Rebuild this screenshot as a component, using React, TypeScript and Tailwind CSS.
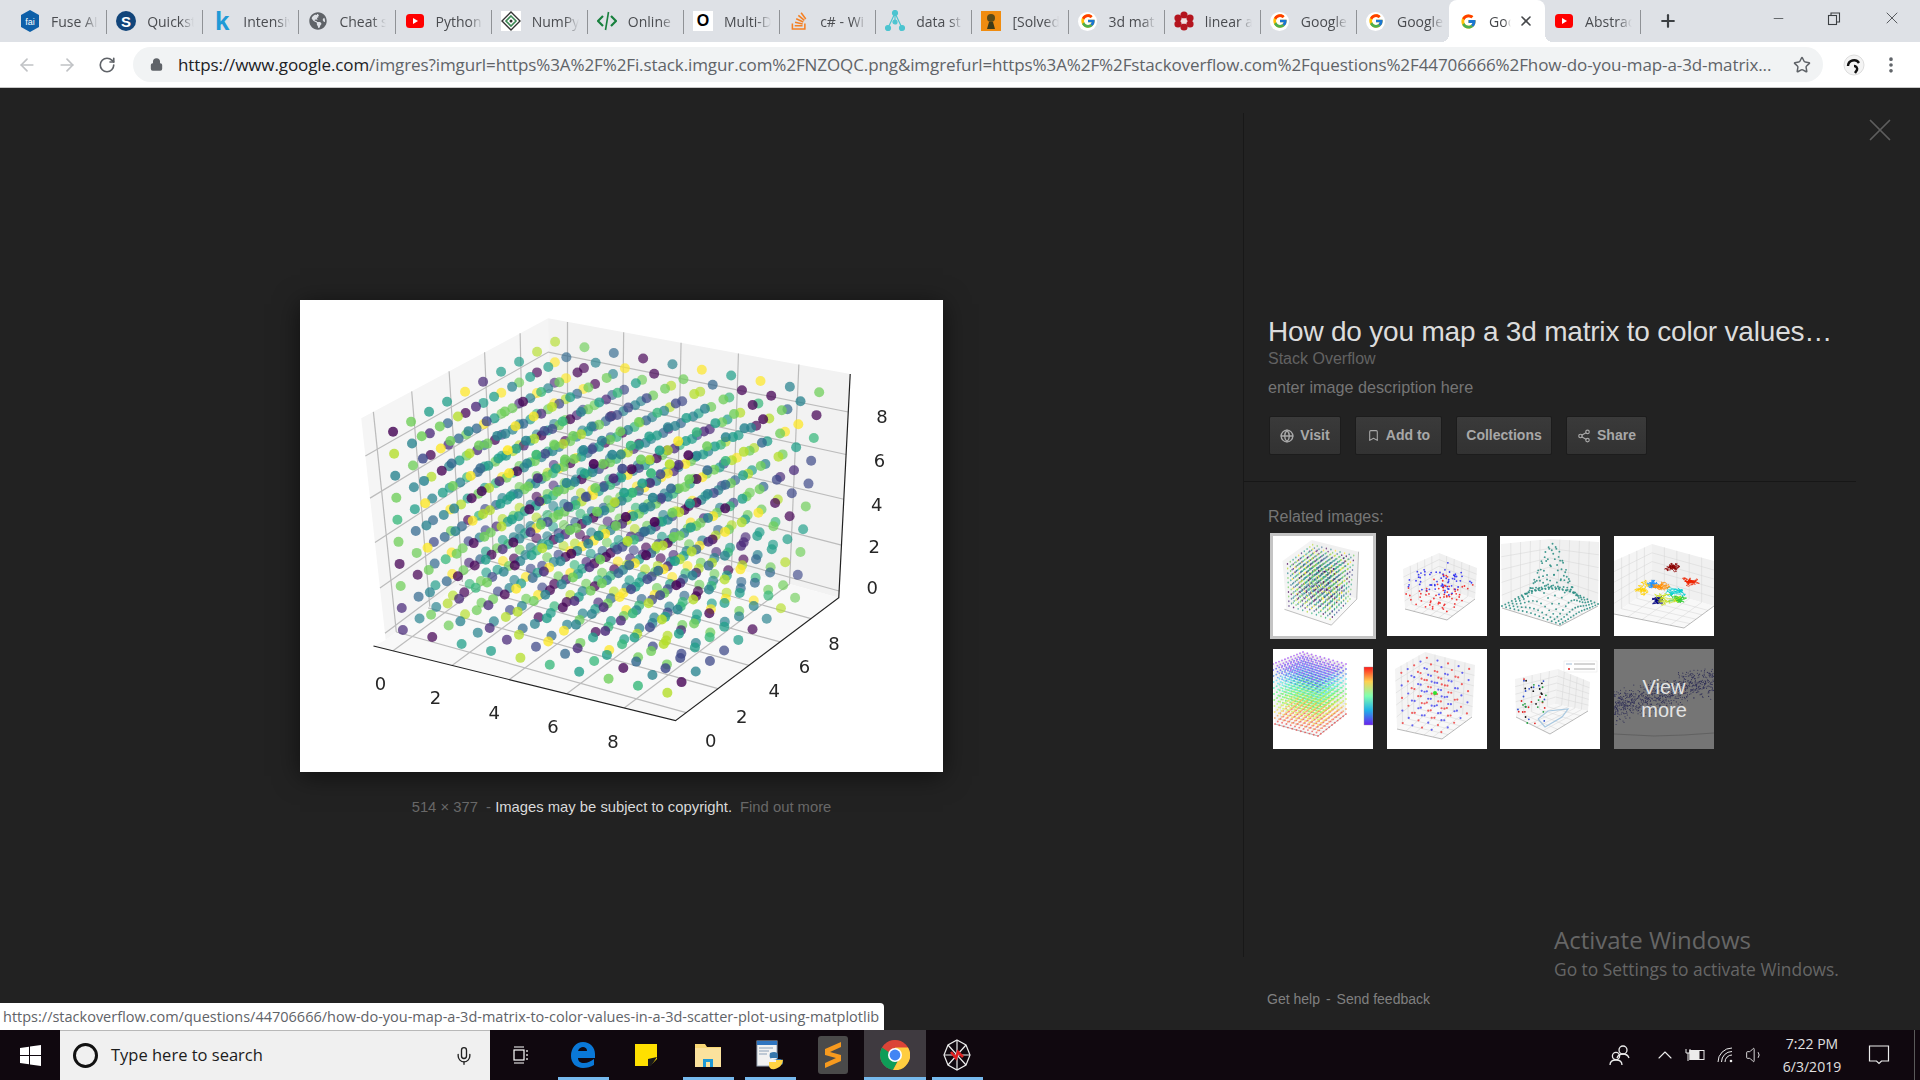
import React from 'react';
import { ArrowLeft, ArrowRight, RotateCw, Lock, Star, Plus, X, Minus, Mic, Globe, Bookmark, Share2, ChevronUp, Volume1, EllipsisVertical } from 'lucide-react';
import { FcGoogle } from 'react-icons/fc';
import { FaStackOverflow, FaGlobeAmericas } from 'react-icons/fa';

type Pt = [number, number];

const rng = (seed: number) => () => {
    seed |= 0; seed = (seed + 0x6d2b79f5) | 0;
    let t = Math.imul(seed ^ (seed >>> 15), 1 | seed);
    t = (t + Math.imul(t ^ (t >>> 7), 61 | t)) ^ t;
    return ((t ^ (t >>> 14)) >>> 0) / 4294967296;
};

const viridis = ['#482878', '#3e4989', '#31688e', '#26828e', '#1f9e89', '#35b779', '#6ece58', '#b5de2b', '#fde725', '#440154', '#26828e', '#1f9e89', '#6ece58'];

const lerp = (a: Pt, b: Pt, t: number): Pt => [a[0] + (b[0] - a[0]) * t, a[1] + (b[1] - a[1]) * t];
const z2 = (x: number, y: number): Pt => [x / 2.45, y / 3];
const line = (a: Pt, b: Pt) => ({ x1: a[0], y1: a[1], x2: b[0], y2: b[1] });
const poly = (...p: Pt[]) => p.map((q) => q.join(',')).join(' ');

// corners of the dot cube, taken off the picture
const C = {
    a: z2(252, 990), b: z2(228, 395),
    c: z2(620, 680), d: z2(625, 125),
    e: z2(900, 1178), f: z2(860, 520),
    g: z2(1213, 893), h: z2(1272, 277),
};

const cubeDots = (seed: number) => {
    const r = rng(seed);
    const dots: { p: Pt; c: string; o: number; k: number }[] = [];
    for (let x = 0; x < 10; x++) {
        for (let y = 0; y < 10; y++) {
            for (let z = 0; z < 10; z++) {
                const u = x / 9, v = y / 9, w = z / 9;
                const bottom = lerp(lerp(C.a, C.e, u), lerp(C.c, C.g, u), v);
                const top = lerp(lerp(C.b, C.f, u), lerp(C.d, C.h, u), v);
                const k = 0.5 * u - 0.87 * v + 0.5 * w;
                dots.push({
                    p: lerp(bottom, top, w),
                    c: viridis[Math.floor(r() * viridis.length)],
                    o: 0.55 + 0.35 * ((k + 0.87) / 1.87),
                    k,
                });
            }
        }
    }
    return dots.sort((m, n) => m.k - n.k);
};

const MAIN_DOTS = cubeDots(7);

const wallT = [0.065, 0.27, 0.47, 0.66, 0.85];
const wallB = [0.064, 0.25, 0.44, 0.63, 0.83];
const zL = [0.03, 0.235, 0.44, 0.64, 0.83];
const floorT = [0.065, 0.26, 0.45, 0.64, 0.83];

const W = {
    lt: z2(150, 355), lb: z2(210, 1020), bt: z2(608, 55), bb: z2(610, 650),
    rt: z2(1348, 222), rb: z2(1320, 893), fl: z2(180, 1038), fr: z2(920, 1262),
};

const xLabels: [string, number, number][] = [['0', 197, 1150], ['2', 332, 1192], ['4', 476, 1237], ['6', 620, 1278], ['8', 767, 1323]];
const yLabels: [string, number, number][] = [['0', 1006, 1322], ['2', 1082, 1248], ['4', 1162, 1172], ['6', 1236, 1100], ['8', 1308, 1030]];
const zLabels: [string, number, number][] = [['0', 1402, 863], ['2', 1407, 740], ['4', 1413, 612], ['6', 1420, 482], ['8', 1426, 350]];

const MainChart = () => (
    <svg width="643" height="472" viewBox="0 0 643 472" className="block">
        <defs>
            <filter id="soft"><feGaussianBlur stdDeviation="0.6" /></filter>
        </defs>
        <g filter="url(#soft)">
            <polygon points={poly(W.lt, W.bt, W.bb, W.lb)} fill="#f5f5f5" />
            <polygon points={poly(W.bt, W.rt, W.rb, W.bb)} fill="#f2f2f2" />
            <polygon points={poly(W.lb, W.bb, W.rb, W.fr, W.fl)} fill="#f8f8f8" />
            <g stroke="#bcbcbc" strokeWidth="1.2">
                {wallT.map((t) => <line key={t} {...line(lerp(W.lt, W.bt, t), lerp(W.lb, W.bb, t))} />)}
                {wallB.map((t) => <line key={t} {...line(lerp(W.bt, W.rt, t), lerp(W.bb, W.rb, t))} />)}
                {zL.map((t) => (
                    <polyline key={t} fill="none" points={poly(lerp(W.lb, W.lt, t), lerp(W.bb, W.bt, t), lerp(W.rb, W.rt, t))} />
                ))}
                {floorT.map((t) => <line key={t} {...line(lerp(W.fl, W.fr, t), lerp(W.bb, W.rb, t))} />)}
                {floorT.map((t) => <line key={t} {...line(lerp(W.fr, W.rb, t), lerp(W.lb, W.bb, t))} />)}
            </g>
            <polyline points={poly(W.fl, W.fr, W.rb, W.rt)} fill="none" stroke="#222" strokeWidth="1.2" />
            {MAIN_DOTS.map((d, i) => <circle key={i} cx={d.p[0]} cy={d.p[1]} r="5" fill={d.c} opacity={d.o} />)}
            <g fontFamily="'DejaVu Sans', sans-serif" fontSize="18" fill="#262626" textAnchor="middle" dominantBaseline="central">
                {[...xLabels, ...yLabels, ...zLabels].map(([t, x, y]) => (
                    <text key={`${x}-${y}`} x={x / 2.45} y={y / 3}>{t}</text>
                ))}
            </g>
        </g>
    </svg>
);

type Box = { l: Pt; lb: Pt; b: Pt; bb: Pt; r: Pt; rb: Pt; f: Pt };

const boxPoint = (k: Box, u: number, v: number, w: number): Pt => {
    const ft: Pt = [k.f[0] + (k.l[0] - k.lb[0] + k.r[0] - k.rb[0]) / 2, k.f[1] + (k.l[1] - k.lb[1] + k.r[1] - k.rb[1]) / 2];
    const bottom = lerp(lerp(k.lb, k.f, u), lerp(k.bb, k.rb, u), v);
    const top = lerp(lerp(k.l, ft, u), lerp(k.b, k.r, u), v);
    return lerp(bottom, top, w);
};

const MiniBox = ({ k }: { k: Box }) => (
    <g>
        <polygon points={poly(k.l, k.b, k.bb, k.lb)} fill="#f4f4f4" />
        <polygon points={poly(k.b, k.r, k.rb, k.bb)} fill="#f0f0f0" />
        <polygon points={poly(k.lb, k.bb, k.rb, k.f)} fill="#f8f8f8" />
        <g stroke="#d4d4d4" strokeWidth="0.5" fill="none">
            {[0.2, 0.4, 0.6, 0.8].map((t) => (
                <g key={t}>
                    <line {...line(lerp(k.l, k.b, t), lerp(k.lb, k.bb, t))} />
                    <line {...line(lerp(k.b, k.r, t), lerp(k.bb, k.rb, t))} />
                    <polyline points={poly(lerp(k.lb, k.l, t), lerp(k.bb, k.b, t), lerp(k.rb, k.r, t))} />
                    <line {...line(lerp(k.lb, k.f, t), lerp(k.bb, k.rb, t))} />
                    <line {...line(lerp(k.f, k.rb, t), lerp(k.lb, k.bb, t))} />
                </g>
            ))}
        </g>
        <polyline points={poly(k.lb, k.f, k.rb)} fill="none" stroke="#777" strokeWidth="0.5" />
    </g>
);

const Thumb = ({ children, bg = '#ffffff' }: { children: React.ReactNode; bg?: string }) => (
    <svg width="100" height="100" viewBox="0 0 100 100" className="block" style={{ background: bg }}>
        <g style={{ filter: 'blur(0.35px)' }}>{children}</g>
    </svg>
);

const Thumb1 = () => (
    <Thumb>
        <svg width="100" height="100" viewBox="0 0 643 472" preserveAspectRatio="none">
            <polygon points={poly(W.lt, W.bt, W.bb, W.lb)} fill="#f4f4f4" />
            <polygon points={poly(W.bt, W.rt, W.rb, W.bb)} fill="#f0f0f0" />
            <polygon points={poly(W.lb, W.bb, W.rb, W.fr, W.fl)} fill="#f8f8f8" />
            <polyline points={poly(W.fl, W.fr, W.rb, W.rt)} fill="none" stroke="#555" strokeWidth="2" />
            {MAIN_DOTS.map((d, i) => <circle key={i} cx={d.p[0]} cy={d.p[1]} r="4.6" fill={d.c} opacity={d.o} />)}
        </svg>
    </Thumb>
);

const Thumb2 = () => {
    const k: Box = { l: [16, 33], lb: [18, 73], b: [52, 17], bb: [52, 50], r: [90, 32], rb: [88, 63], f: [60, 84] };
    const r = rng(22);
    return (
        <Thumb>
            <MiniBox k={k} />
            {Array.from({ length: 130 }, (_, i) => {
                const low = i % 2 === 0;
                const p = boxPoint(k, r(), r(), low ? 0.1 + r() * 0.4 : 0.45 + r() * 0.45);
                return <circle key={i} cx={p[0]} cy={p[1]} r="0.9" fill={low ? '#f01818' : '#2020f0'} opacity="0.85" />;
            })}
        </Thumb>
    );
};

const Thumb3 = () => {
    const k: Box = { l: [1, 8], lb: [2, 72], b: [50, 3], bb: [48, 50], r: [99, 6], rb: [98, 70], f: [60, 90] };
    return (
        <Thumb>
            <MiniBox k={k} />
            {Array.from({ length: 15 }, (_, a) =>
                Array.from({ length: 15 }, (_, b) => {
                    const u = a / 14 - 0.5, v = b / 14 - 0.5;
                    const p = boxPoint(k, a / 14, b / 14, 0.03 + 1.02 * Math.exp(-(u * u + v * v) * 14));
                    return <circle key={`${a}-${b}`} cx={p[0]} cy={p[1]} r="0.95" fill="#2f8f85" opacity="0.9" />;
                }),
            )}
        </Thumb>
    );
};

const Thumb4 = () => {
    const k: Box = { l: [0, 25], lb: [0, 78], b: [38, 8], bb: [38, 52], r: [100, 25], rb: [100, 70], f: [70, 92] };
    const r = rng(5);
    const cols = ['#000080', '#1e90ff', '#00ced1', '#32cd32', '#c8e020', '#ffd000', '#ff8c00', '#ee2200', '#8b0000'];
    const stops: Pt[] = [[42, 66], [40, 50], [60, 55], [72, 62], [56, 64], [28, 54], [48, 48], [76, 45], [60, 32]];
    return (
        <Thumb>
            <MiniBox k={k} />
            {stops.map((s, i) => {
                let x = s[0], y = s[1];
                const pts: Pt[] = [[x, y]];
                for (let n = 0; n < 90; n++) {
                    x += (r() - 0.5) * 7 + (s[0] - x) * 0.06;
                    y += (r() - 0.5) * 4 + (s[1] - y) * 0.08;
                    pts.push([x, y]);
                }
                return <polyline key={i} points={poly(...pts)} fill="none" stroke={cols[i]} strokeWidth="0.7" />;
            })}
        </Thumb>
    );
};

const rainbow = (t: number) => `hsl(${Math.round(t * 270)} 90% 60%)`;

const Thumb5 = () => {
    const k: Box = { l: [0, 15], lb: [2, 75], b: [30, 3], bb: [30, 50], r: [73, 15], rb: [73, 65], f: [45, 87] };
    const cells = Array.from({ length: 11 }, (_, i) => i);
    return (
        <Thumb>
            <MiniBox k={k} />
            {cells.map((a) => cells.map((b) => cells.map((c) => {
                const p = boxPoint(k, a / 10, b / 10, c / 10);
                return <circle key={`${a}${b}${c}`} cx={p[0]} cy={p[1]} r="0.95" fill={rainbow(c / 10)} opacity="0.65" />;
            })))}
            <defs>
                <linearGradient id="bar" x1="0" y1="0" x2="0" y2="1">
                    <stop offset="0" stopColor="#ff1a1a" />
                    <stop offset="0.25" stopColor="#ffd050" />
                    <stop offset="0.5" stopColor="#7fffb0" />
                    <stop offset="0.75" stopColor="#20b0e8" />
                    <stop offset="1" stopColor="#6a20f0" />
                </linearGradient>
            </defs>
            <rect x="91" y="18" width="9" height="58" fill="url(#bar)" stroke="#999" strokeWidth="0.4" />
        </Thumb>
    );
};

const Thumb6 = () => {
    const k: Box = { l: [8, 20], lb: [10, 80], b: [38, 3], bb: [38, 55], r: [88, 16], rb: [85, 68], f: [55, 90] };
    const cells = [0, 1, 2, 3, 4];
    return (
        <Thumb>
            <MiniBox k={k} />
            {cells.map((a) => cells.map((b) => cells.map((c) => {
                const p = boxPoint(k, 0.08 + a / 4.7, 0.08 + b / 4.7, 0.08 + c / 4.7);
                return <circle key={`${a}${b}${c}`} cx={p[0]} cy={p[1]} r="1.1" fill={(a + b + c) % 2 ? '#2828f0' : '#f02020'} opacity="0.7" />;
            })))}
            <circle cx="48" cy="44" r="2" fill="#30e030" />
        </Thumb>
    );
};

const Thumb7 = () => {
    const k: Box = { l: [15, 30], lb: [16, 68], b: [58, 20], bb: [55, 55], r: [90, 33], rb: [88, 62], f: [50, 85] };
    const r = rng(41);
    const cols = ['#e02020', '#111111', '#20a040', '#3050d0'];
    return (
        <Thumb>
            <MiniBox k={k} />
            <polyline points="38,70 48,62 68,60 62,68 45,78 38,70" fill="none" stroke="#a8c8e0" strokeWidth="1.2" />
            {Array.from({ length: 44 }, (_, i) => (
                <circle key={i} cx={17 + r() * 30} cy={30 + r() * 46} r="0.9" fill={cols[i % 4]} />
            ))}
            <rect x="64" y="12" width="33" height="11" fill="#fff" stroke="#ddd" strokeWidth="0.4" />
            <line x1="66" y1="15" x2="72" y2="15" stroke="#88aacc" strokeWidth="0.8" />
            <circle cx="69" cy="20" r="1" fill="#e02020" />
            <line x1="74" y1="15" x2="95" y2="15" stroke="#aaa" strokeWidth="1" />
            <line x1="74" y1="20" x2="95" y2="20" stroke="#aaa" strokeWidth="1" />
        </Thumb>
    );
};

const Thumb8 = () => {
    const r = rng(88);
    return (
        <div className="relative w-[100px] h-[100px]">
            <Thumb bg="#7a7a7a">
                {Array.from({ length: 800 }, (_, i) => {
                    const x = r() * 100;
                    return <circle key={i} cx={x} cy={58 - x * 0.27 + (r() + r() + r() - 1.5) * 14} r="0.55" fill="#16164e" />;
                })}
                <polyline points="0,85 40,87 70,86 100,84" fill="none" stroke="#4a4a4a" strokeWidth="0.6" />
            </Thumb>
            <div className="absolute inset-0 flex items-center justify-center text-center text-[20px] leading-[23px] text-[#e4e4e4] bg-[#6b6b6b]/30 font-['Liberation_Sans',sans-serif]">
                View<br />more
            </div>
        </div>
    );
};

const YouTubeIcon = () => (
    <svg width="18" height="18" viewBox="0 0 18 18">
        <rect x="0" y="2" width="18" height="14" rx="3.5" fill="#ff0000" />
        <path d="M7 6l5 3-5 3z" fill="#fff" />
    </svg>
);

const GoogleIcon = () => (
    <span className="w-[19px] h-[19px] rounded-full bg-white flex items-center justify-center"><FcGoogle size={16} /></span>
);

const NumPyIcon = () => (
    <svg width="20" height="20" viewBox="0 0 20 20">
        <rect width="20" height="20" fill="#fff" />
        <path d="M10 1l9 9-9 9-9-9z" fill="none" stroke="#333" strokeWidth="1.4" />
        <path d="M10 5l5 5-5 5-5-5z" fill="none" stroke="#3d8a55" strokeWidth="1.6" />
        <circle cx="10" cy="10" r="1.5" fill="#333" />
    </svg>
);

const tabIcons: Record<string, React.ReactNode> = {
    fuse: (
        <svg width="20" height="22" viewBox="0 0 20 22">
            <path d="M10 0l9 5v12l-9 5-9-5V5z" fill="#0d5fa8" />
            <text x="10" y="15" fontSize="9" fontFamily="'Liberation Sans', sans-serif" fill="#fff" textAnchor="middle">fai</text>
        </svg>
    ),
    quick: (
        <svg width="20" height="20" viewBox="0 0 20 20">
            <circle cx="10" cy="10" r="10" fill="#12457a" />
            <text x="10" y="15.500" fontSize="15" fontFamily="'Liberation Sans', sans-serif" fontWeight="700" fill="#fff" textAnchor="middle">S</text>
        </svg>
    ),
    k: <span className="text-[26px] leading-none font-bold text-[#1f9ad6] font-['Liberation_Sans',sans-serif]">k</span>,
    globe: <FaGlobeAmericas size={18} color="#5f6368" />,
    yt: <YouTubeIcon />,
    numpy: <NumPyIcon />,
    code: (
        <svg width="20" height="20" viewBox="0 0 20 20" fill="none" stroke="#17803d" strokeWidth="2.2">
            <path d="M6 5l-5 5 5 5M14 5l5 5-5 5" />
            <path d="M11.500 1l-3 18" stroke="#17803d" strokeWidth="1.6" />
        </svg>
    ),
    o: <span className="w-5 h-5 bg-white flex items-center justify-center text-[16px] font-bold text-black font-['Liberation_Sans',sans-serif]">O</span>,
    so: <FaStackOverflow size={20} color="#f48024" />,
    tree: (
        <svg width="20" height="22" viewBox="0 0 20 22" fill="#4cc4d0" stroke="#4cc4d0" strokeWidth="1.2">
            <path d="M10 3L3 18M10 3l7 15M10 3v9" fill="none" />
            <circle cx="10" cy="3" r="2.5" /><circle cx="3" cy="18" r="2.5" /><circle cx="17" cy="18" r="2.5" /><circle cx="10" cy="12" r="2" />
        </svg>
    ),
    solved: (
        <svg width="20" height="20" viewBox="0 0 20 20">
            <rect width="20" height="20" fill="#f08c10" />
            <circle cx="10" cy="7" r="4" fill="#5b4a18" />
            <path d="M6 18l2-7h4l2 7z" fill="#3d3a18" />
        </svg>
    ),
    g: <GoogleIcon />,
    flower: (
        <svg width="20" height="20" viewBox="0 0 20 20" fill="#b4141e">
            <circle cx="10" cy="4" r="3.6" /><circle cx="10" cy="16" r="3.6" /><circle cx="4" cy="7" r="3.6" /><circle cx="16" cy="7" r="3.6" /><circle cx="4" cy="13" r="3.6" /><circle cx="16" cy="13" r="3.6" />
            <circle cx="10" cy="10" r="2.6" fill="#f4dcdc" />
        </svg>
    ),
};

const tabs = [
    { icon: 'fuse', label: 'Fuse AI' },
    { icon: 'quick', label: 'Quickst' },
    { icon: 'k', label: 'Intensiv' },
    { icon: 'globe', label: 'Cheat s' },
    { icon: 'yt', label: 'Python' },
    { icon: 'numpy', label: 'NumPy' },
    { icon: 'code', label: 'Online' },
    { icon: 'o', label: 'Multi-D' },
    { icon: 'so', label: 'c# - Wi' },
    { icon: 'tree', label: 'data st' },
    { icon: 'solved', label: '[Solved' },
    { icon: 'g', label: '3d mat' },
    { icon: 'flower', label: 'linear a' },
    { icon: 'g', label: 'Google' },
    { icon: 'g', label: 'Google' },
];

const TabBar = () => (
    <div className="h-[42px] bg-[#dee1e6] flex pl-[11px] relative shrink-0 font-['Open_Sans',sans-serif]">
        {tabs.map((t, i) => (
            <div key={i} className="w-[96.150px] h-[42px] flex items-center shrink-0 relative">
                <span className="w-[24px] ml-[7px] flex justify-center shrink-0">{tabIcons[t.icon]}</span>
                <span className="ml-[9px] w-[47px] overflow-hidden whitespace-nowrap text-[14px] text-[#4a4c50] [mask-image:linear-gradient(to_right,black_70%,transparent)]">{t.label}</span>
                <span className="absolute right-0 top-[10px] h-[24px] w-px bg-[#8f9296]" />
            </div>
        ))}
        <div className="w-[96px] h-[42px] flex items-center bg-white rounded-t-[8px] shrink-0 -ml-[4px] relative">
            <span className="absolute -left-[8px] bottom-0 w-[8px] h-[8px] bg-[radial-gradient(circle_at_0_0,transparent_8px,white_8px)]" />
            <span className="absolute -right-[8px] bottom-0 w-[8px] h-[8px] bg-[radial-gradient(circle_at_100%_0,transparent_8px,white_8px)]" />
            <span className="w-[24px] ml-[7px] flex justify-center shrink-0"><FcGoogle size={17} /></span>
            <span className="ml-[9px] w-[22px] overflow-hidden whitespace-nowrap text-[14px] text-[#45474a] [mask-image:linear-gradient(to_right,black_70%,transparent)]">Google</span>
            <X size={16} strokeWidth={2.4} className="ml-[7px] text-[#45474a]" />
        </div>
        <div className="w-[96px] h-[42px] flex items-center shrink-0 relative">
            <span className="w-[24px] ml-[7px] flex justify-center shrink-0"><YouTubeIcon /></span>
            <span className="ml-[9px] w-[47px] overflow-hidden whitespace-nowrap text-[14px] text-[#4a4c50] [mask-image:linear-gradient(to_right,black_70%,transparent)]">Abstrac</span>
            <span className="absolute right-0 top-[10px] h-[24px] w-px bg-[#8f9296]" />
        </div>
        <Plus size={20} strokeWidth={2.6} className="ml-[17px] mt-[11px] text-[#3c4043]" />
        <div className="ml-auto flex items-start text-[#3c4043]">
            <Minus size={15} strokeWidth={1.2} className="mt-[11px]" />
            <svg width="14" height="14" viewBox="0 0 14 14" fill="none" stroke="#3c4043" strokeWidth="1.1" className="ml-[41px] mt-[12px]">
                <rect x="1.500" y="3.500" width="8" height="9" />
                <path d="M4 3.500V1h8.500v9H9.500" />
            </svg>
            <X size={20} strokeWidth={1} className="ml-[41px] mt-[8px] mr-[18px]" />
        </div>
    </div>
);

const AddressBar = () => (
    <div className="h-[46px] bg-white flex items-center shrink-0 border-b border-[#c8c8c8]">
        <ArrowLeft size={20} className="ml-[17px] text-[#c0c2c5]" />
        <ArrowRight size={20} className="ml-[20px] text-[#c0c2c5]" />
        <RotateCw size={18} strokeWidth={2.2} className="ml-[21px] text-[#5f6368]" />
        <div className="ml-[17px] w-[1690px] h-[35px] rounded-full bg-[#f1f3f4] flex items-center pl-[17px] relative font-['Open_Sans',sans-serif]">
            <Lock size={13} strokeWidth={3} className="text-[#5f6368] fill-[#5f6368]" />
            <span className="ml-[15px] text-[17px] tracking-[-0.1px] whitespace-nowrap text-[#5f6368]">
                <span className="text-[#202124]">https://www.google.com</span>/imgres?imgurl=https%3A%2F%2Fi.stack.imgur.com%2FNZOQC.png&amp;imgrefurl=https%3A%2F%2Fstackoverflow.com%2Fquestions%2F44706666%2Fhow-do-you-map-a-3d-matrix...
            </span>
            <Star size={18} strokeWidth={2} className="absolute right-[12px] text-[#5f6368]" />
        </div>
        <svg width="22" height="22" viewBox="0 0 22 22" className="ml-[20px]">
            <circle cx="11" cy="11" r="10" fill="#f4f4f4" stroke="#ddd" />
            <path d="M5 12a6 6 0 0 1 11-3" fill="none" stroke="#111" strokeWidth="2.4" />
            <path d="M11 12a3 3 0 0 1 3 4l-2 3" fill="none" stroke="#111" strokeWidth="2.4" />
        </svg>
        <EllipsisVertical size={20} strokeWidth={2.4} className="ml-[16px] text-[#5f6368]" />
    </div>
);

const ActionButton = ({ icon, label, width }: { icon?: React.ReactNode; label: string; width: string }) => (
    <div className={`${width} h-[39px] rounded-[2px] border border-[#1c1c1c] bg-gradient-to-b from-[#3a3a3a] to-[#323232] flex items-center justify-center gap-[6px] text-[14px] font-bold text-[#a8a8a8] shrink-0`}>
        {icon}
        <span>{label}</span>
    </div>
);

const Panel = () => (
    <div className="flex-1 font-['Liberation_Sans',sans-serif] relative">
        <div className="mt-[25px] h-[844px] border-l border-[#181818]">
            <div className="pt-[201px] pl-[24px] pr-[24px]">
                <h1 className="text-[28px] leading-[36px] text-[#dcdcdc] font-normal whitespace-nowrap tracking-[-0.2px]">How do you map a 3d matrix to color values…</h1>
                <div className="text-[16px] leading-[20px] -mt-[1px] text-[#626262]">Stack Overflow</div>
                <div className="text-[16.200px] leading-[20px] mt-[8px] text-[#757575]">enter image description here</div>
            </div>
            <div className="flex gap-[14px] pl-[25px] mt-[19px]">
                <ActionButton label="Visit" width="w-[72px]" icon={<Globe size={14} strokeWidth={2.4} />} />
                <ActionButton label="Add to" width="w-[87px]" icon={<Bookmark size={13} strokeWidth={2} />} />
                <ActionButton label="Collections" width="w-[96px]" />
                <ActionButton label="Share" width="w-[81px]" icon={<Share2 size={14} strokeWidth={2} />} />
            </div>
            <div className="mt-[26px] w-[612px] h-px bg-[#171717]" />
            <div className="pl-[24px] mt-[25px] text-[16px] leading-[20px] text-[#757575]">Related images:</div>
            <div className="mt-[9px] pl-[29px] grid grid-cols-[100px_100px_100px_100px] gap-x-[13.7px] gap-y-[13px] w-fit">
                <div className="w-[100px] h-[100px] outline-[3px] outline-[#c4c4c4] outline outline-offset-0"><Thumb1 /></div>
                <Thumb2 />
                <Thumb3 />
                <Thumb4 />
                <Thumb5 />
                <Thumb6 />
                <Thumb7 />
                <Thumb8 />
            </div>
        </div>
        <div className="pl-[24px] mt-[34px] text-[14px] leading-[16px] text-[#808080]">Get help<span className="mx-[6px]">-</span>Send feedback</div>
        <X size={38} strokeWidth={1.1} className="absolute left-[618px] top-[23px] text-[#5e5e5e]" />
    </div>
);

const TaskIcon = ({ children, active, lit }: { children: React.ReactNode; active?: boolean; lit?: boolean }) => (
    <div className={`w-[62.300px] h-[50px] flex items-center justify-center relative shrink-0 ${lit ? 'bg-[#3f3a40]' : ''}`}>
        {children}
        {active && <span className={`absolute bottom-0 h-[3px] bg-[#76b9ed] ${lit ? 'w-full' : 'w-[51px]'}`} />}
    </div>
);

const Taskbar = () => (
    <div className="h-[50px] bg-[#10080f] flex items-center shrink-0 relative font-['Open_Sans',sans-serif]">
        <div className="w-[60px] flex justify-center">
            <svg width="21" height="21" viewBox="0 0 21 21" fill="#fff">
                <path d="M0 3l9-1.300v8.300H0zM10 1.500L21 0v10H10zM0 11h9v8.300L0 18zM10 11h11v10l-11-1.500z" />
            </svg>
        </div>
        <div className="w-[430px] h-[50px] bg-[#f0f0f0] border-t border-[#b8b8b8] flex items-center pl-[13px] relative">
            <span className="w-[25px] h-[25px] rounded-full border-[3px] border-[#111] shrink-0" />
            <span className="ml-[13px] text-[16.500px] text-[#1c1c1c]">Type here to search</span>
            <Mic size={20} strokeWidth={1.6} className="absolute left-[394px] text-[#222]" />
        </div>
        <TaskIcon>
            <svg width="20" height="20" viewBox="0 0 20 20" fill="none" stroke="#fff" strokeWidth="1.2">
                <rect x="3" y="5" width="10" height="10" /><path d="M3 2h10M3 18h10M16 5v2M16 9v2M16 13v2" />
            </svg>
        </TaskIcon>
        <TaskIcon active>
            <svg width="26" height="28" viewBox="0 0 26 28">
                <path d="M13 1C6 1 1 7 1 15c0 7 5 12 12 12 4 0 8-1 11-3v-6c-3 2-6 4-10 4-4 0-6-2-6-5h17v-4C25 6 20 1 13 1zM8 10c1-3 3-4 5-4s4 1 4 4z" fill="#0a78d7" />
            </svg>
        </TaskIcon>
        <TaskIcon>
            <svg width="24" height="24" viewBox="0 0 24 24">
                <path d="M1 1h22v15l-7 7H1z" fill="#ffe000" />
                <path d="M23 14l-9 2v7h3z" fill="#1a1a1a" />
            </svg>
        </TaskIcon>
        <TaskIcon active>
            <svg width="28" height="26" viewBox="0 0 28 26">
                <path d="M1 2h10l2 3h14v20H1z" fill="#f8d775" />
                <path d="M1 6h26v19H1z" fill="#fbe29d" />
                <path d="M9 25v-8h10v8h-3v-5h-4v5z" fill="#1f9ad6" />
            </svg>
        </TaskIcon>
        <TaskIcon active>
            <svg width="28" height="30" viewBox="0 0 28 30">
                <rect x="1" y="1" width="20" height="25" fill="#f2f2f2" stroke="#9aa7b8" />
                <rect x="1" y="1" width="20" height="4" fill="#2f75c0" />
                <path d="M3 8h14M3 11h10M3 14h8" stroke="#8aa0b8" strokeWidth="1" />
                <path d="M14 13c4-2 8-1 8 2v3h-7v1h9c3 0 3 3 3 4s-1 2-3 2h-2v-3c0-2-2-3-5-3s-4-2-3-6z" fill="#3776ab" />
                <path d="M27 19c0 6-4 9-8 10s-6-1-6-4v-3h7v-2h4c2 0 3 0 3-1z" fill="#ffd343" />
            </svg>
        </TaskIcon>
        <TaskIcon>
            <svg width="30" height="38" viewBox="0 0 30 38">
                <rect x="0" y="0" width="30" height="38" rx="3" fill="#4a4a4a" />
                <path d="M23 6L7 13v6l11 3-11 5v5l16-7v-6l-11-3 11-5z" fill="#f79a1e" />
            </svg>
        </TaskIcon>
        <TaskIcon active lit>
            <svg width="30" height="30" viewBox="0 0 30 30">
                <circle cx="15" cy="15" r="15" fill="#db4437" />
                <path d="M15 15L2 8a15 15 0 0 1 26 0z" fill="#db4437" />
                <path d="M2 7.500a15 15 0 0 0 11 22.400L19 19z" fill="#0f9d58" />
                <path d="M28 7.500H15l4 11.500-6 11A15 15 0 0 0 28 7.500z" fill="#ffcd40" />
                <circle cx="15" cy="15" r="7" fill="#fff" />
                <circle cx="15" cy="15" r="5.400" fill="#4285f4" />
            </svg>
        </TaskIcon>
        <TaskIcon active>
            <svg width="28" height="32" viewBox="0 0 28 32" fill="none" stroke="#ececec" strokeWidth="1.2">
                <path d="M14 1l9 5 4 10-4 10-9 5-9-5-4-10 4-10z" />
                <path d="M14 1v30M1 16h26M5 6l18 20M23 6L5 26" />
                <path d="M8 13l5 6 2-6 5 5" stroke="#e02020" strokeWidth="2.6" />
            </svg>
        </TaskIcon>
        <div className="absolute left-[1609px] top-0 h-[50px] flex items-center text-[#ececec]">
            <svg width="22" height="22" viewBox="0 0 22 22" fill="none" stroke="currentColor" strokeWidth="1.3">
                <circle cx="14" cy="6" r="4" /><path d="M8 14c1-3 3-4 6-4s5 1 6 4" />
                <circle cx="7" cy="12" r="3.600" /><path d="M1 21c0-3 2-5 6-5s6 2 6 5" />
            </svg>
            <ChevronUp size={24} strokeWidth={1.1} className="ml-[22px]" />
            <svg width="20" height="14" viewBox="0 0 20 14" className="ml-[8px]" fill="none" stroke="currentColor" strokeWidth="1">
                <rect x="5" y="2.500" width="14" height="9" />
                <rect x="5" y="2.500" width="9" height="9" fill="currentColor" />
                <path d="M1 1v4h4V1M3 5v8" />
            </svg>
            <svg width="18" height="16" viewBox="0 0 18 16" className="ml-[12px]" fill="none" stroke="currentColor" strokeWidth="1">
                <path d="M1 15a14 14 0 0 1 14-14M4.500 15a10.500 10.500 0 0 1 10.500-10.500M8 15a7 7 0 0 1 7-7" />
                <circle cx="14" cy="14" r="1.300" fill="currentColor" stroke="none" />
            </svg>
            <Volume1 size={20} strokeWidth={1.1} className="ml-[10px]" />
        </div>
        <div className="absolute left-[1768px] w-[88px] top-0 h-[50px] flex flex-col items-center justify-center text-[14px] leading-[23px] text-[#e0e0e0]">
            <span>7:22 PM</span>
            <span>6/3/2019</span>
        </div>
        <svg width="22" height="22" viewBox="0 0 22 22" fill="none" stroke="#ececec" strokeWidth="1.2" className="absolute left-[1868px] top-[14px]">
            <path d="M1.500 2h19v15h-7l-2.500 2.500L8.500 17h-7z" />
        </svg>
        <span className="absolute left-[1914px] top-0 h-full w-px bg-[#5a5a5a]" />
    </div>
);

export default function App() {
    return (
        <div className="w-[1920px] h-[1080px] overflow-hidden flex flex-col bg-[#222222]">
            <TabBar />
            <AddressBar />
            <main className="flex-1 flex relative min-h-0">
                <div className="w-[1243px] shrink-0 flex flex-col items-center pt-[212px] font-['Liberation_Sans',sans-serif]">
                    <div className="bg-white shadow-[0_4px_24px_rgba(0,0,0,0.55)]">
                        <MainChart />
                    </div>
                    <div className="mt-[25px] text-[14.800px] leading-[20px] text-[#686868]">
                        514 × 377&nbsp; -&nbsp;<span className="text-[#dadada]">Images may be subject to copyright.</span><span className="ml-[8px]">Find out more</span>
                    </div>
                </div>
                <Panel />
                {/* overlays */}
                <div className="absolute left-[1554px] top-[836px] font-['Open_Sans',sans-serif] text-[#666666] pointer-events-none">
                    <div className="text-[24px] leading-[32px]">Activate Windows</div>
                    <div className="text-[17.400px] leading-[26px]">Go to Settings to activate Windows.</div>
                </div>
                <div className="absolute left-0 bottom-0 h-[27px] w-[884px] bg-white rounded-tr-[4px] pl-[3px] flex items-center text-[14.500px] text-[#5f6368] whitespace-nowrap font-['Open_Sans',sans-serif]">
                    https://stackoverflow.com/questions/44706666/how-do-you-map-a-3d-matrix-to-color-values-in-a-3d-scatter-plot-using-matplotlib
                </div>
            </main>
            <Taskbar />
        </div>
    );
}
